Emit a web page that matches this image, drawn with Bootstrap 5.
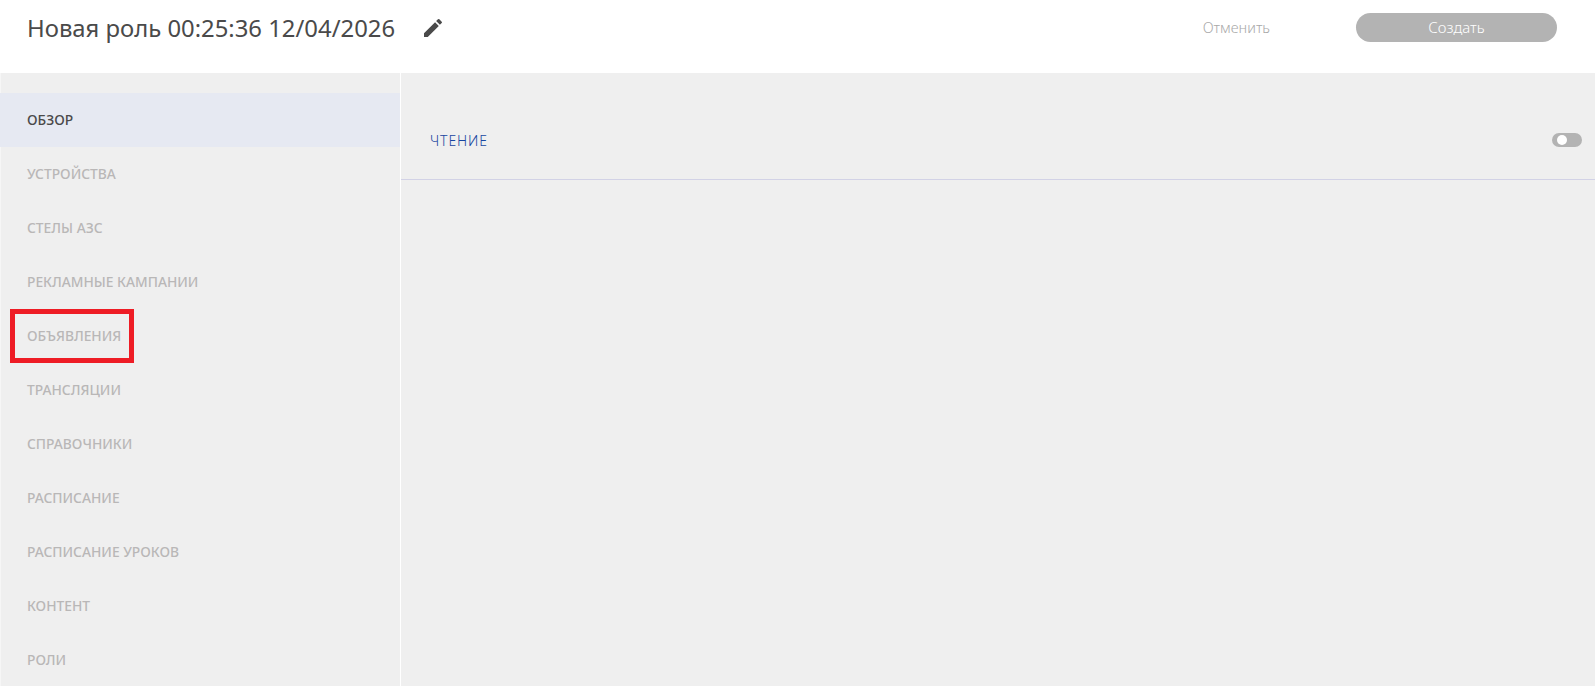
<!DOCTYPE html>
<html lang="ru">
<head>
    <meta charset="UTF-8">
    <meta name="viewport" content="width=device-width, initial-scale=1.0">
    <title>Новая роль</title>
    <link href="https://cdn.jsdelivr.net/npm/bootstrap@5.3.3/dist/css/bootstrap.min.css" rel="stylesheet">
    <style>
        html, body { height: 100%; }
        body { font-family: "Noto Sans", "Open Sans", sans-serif; background: #fff; overflow: hidden; }
        .top-bar { height: 73px; padding: 0 38px 0 27px; }
        .role-title { font-size: 23.85px; line-height: 56px; color: #4a4a4a; font-weight: 400; margin: 0; }
        .edit-btn { margin-left: 26px; line-height: 0; }
        .top-actions { padding-top: 13px; }
        .btn-cancel { font-size: 14.5px; line-height: 29px; color: #a8a8a8; font-weight: 300; margin-right: 86px; }
        .btn-create { width: 201px; height: 29px; border-radius: 15px; background: #b3b3b3; color: #fff; font-size: 15px; font-weight: 300; line-height: 29px; text-align: center; }
        .main-area { height: 613px; background: #efefef; }
        .side-menu { width: 401px; padding-top: 20px; border-right: 1px solid #fff; box-shadow: inset 1px 0 0 #f6f6f6; position: relative; flex-shrink: 0; }
        .menu-item { height: 54px; padding: 0 0 0 27px; font-size: 13.8px; font-weight: 500; color: #b9b7b7; display: flex; align-items: center; }
        .menu-item.is-active { background: #e6e9f2; color: #4a4a4a; }
        .red-frame { position: absolute; left: 10px; top: 236px; width: 124px; height: 54px; border: 5px solid #ee1c25; }
        .perm-row { height: 107px; padding: 28px 13px 0 29px; border-bottom: 1px solid #d2d2e6; }
        .perm-label { font-size: 14px; font-weight: 300; letter-spacing: .9px; color: #1746a0; }
        .toggle-pill { width: 30px; height: 14px; background: #b3b3b3; border-radius: 7px; position: relative; }
        .toggle-pill::before { content: ""; position: absolute; left: 5px; top: 2px; width: 10px; height: 10px; background: #fff; border-radius: 50%; }
    </style>
</head>
<body>
<div class="top-bar d-flex align-items-start justify-content-between">
    <div class="d-flex align-items-center">
        <h1 class="role-title">Новая роль 00:25:36 12/04/2026</h1>
        <span class="edit-btn">
            <svg width="24" height="24" viewBox="0 0 24 24" fill="#4a4a4a"><path d="M3 17.25V21h3.75L17.81 9.94l-3.75-3.75L3 17.25zM20.71 7.04a1 1 0 0 0 0-1.41l-2.34-2.34a1 1 0 0 0-1.41 0l-1.83 1.83 3.75 3.75 1.83-1.83z"/></svg>
        </span>
    </div>
    <div class="top-actions d-flex align-items-center">
        <span class="btn-cancel">Отменить</span>
        <div class="btn-create">Создать</div>
    </div>
</div>
<div class="main-area d-flex">
    <div class="side-menu">
        <div class="menu-item is-active">ОБЗОР</div>
        <div class="menu-item">УСТРОЙСТВА</div>
        <div class="menu-item">СТЕЛЫ АЗС</div>
        <div class="menu-item">РЕКЛАМНЫЕ КАМПАНИИ</div>
        <div class="menu-item">ОБЪЯВЛЕНИЯ</div>
        <div class="menu-item">ТРАНСЛЯЦИИ</div>
        <div class="menu-item">СПРАВОЧНИКИ</div>
        <div class="menu-item">РАСПИСАНИЕ</div>
        <div class="menu-item">РАСПИСАНИЕ УРОКОВ</div>
        <div class="menu-item">КОНТЕНТ</div>
        <div class="menu-item">РОЛИ</div>
        <div class="red-frame"></div>
    </div>
    <div class="flex-grow-1">
        <div class="perm-row d-flex align-items-center justify-content-between">
            <span class="perm-label">ЧТЕНИЕ</span>
            <span class="toggle-pill"></span>
        </div>
    </div>
</div>
<script src="https://cdn.jsdelivr.net/npm/bootstrap@5.3.3/dist/js/bootstrap.bundle.min.js"></script>
</body>
</html>
